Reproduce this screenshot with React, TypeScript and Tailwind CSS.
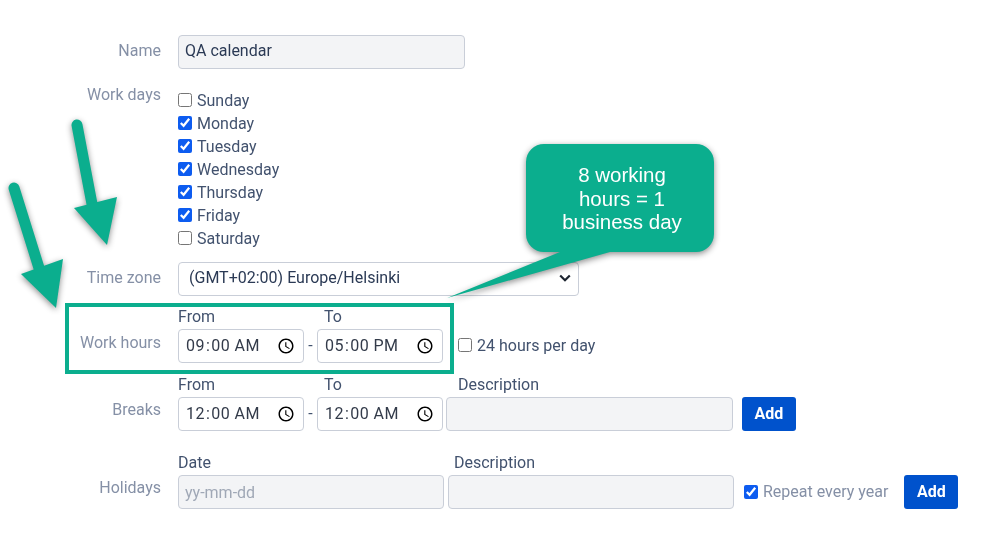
import React from "react";

const font = { fontFamily: "Roboto, sans-serif" };

function Row({ label, labelClass = "", className = "", children }: { label: string; labelClass?: string; className?: string; children: React.ReactNode }) {
  return (
    <div className={`flex ${className}`}>
      <div className={`w-[161px] shrink-0 text-right text-[#8590a6] ${labelClass}`}>{label}</div>
      <div className="ml-[17px] min-w-0 grow">{children}</div>
    </div>
  );
}

function Check({ label, checked = false, className = "" }: { label: string; checked?: boolean; className?: string }) {
  return (
    <label className={`flex h-[23px] items-center text-[#42526e] ${className}`}>
      <input type="checkbox" defaultChecked={checked} className="m-0 mb-[2px] h-[14px] w-[14px] accent-[#0d5cf0]" />
      <span className="ml-[5px]">{label}</span>
    </label>
  );
}

function Time({ value }: { value: string }) {
  return (
    <input
      type="time"
      defaultValue={value}
      className="h-[34px] w-[126px] rounded border border-[#c9ced8] bg-white pb-[1px] pl-[6px] pr-[8px] tracking-[0.45px] text-[#333b4a] outline-none [&::-webkit-calendar-picker-indicator]:m-0 [&::-webkit-calendar-picker-indicator]:h-[18px] [&::-webkit-calendar-picker-indicator]:w-[18px] [&::-webkit-calendar-picker-indicator]:p-0"
    />
  );
}

function Field({ w, placeholder, value, className = "" }: { w: string; placeholder?: string; value?: string; className?: string }) {
  return (
    <input
      readOnly
      placeholder={placeholder}
      defaultValue={value}
      className={`h-[34px] ${w} rounded border border-[#c9ced8] bg-[#f3f4f6] px-[6px] text-[#2b3a55] outline-none placeholder:text-[#a0a8b6] ${className}`}
    />
  );
}

function Add({ className = "" }: { className?: string }) {
  return (
    <button className={`h-[34px] w-[54px] rounded-[3px] bg-[#0052cc] font-bold text-white ${className}`}>Add</button>
  );
}

const Cap = ({ className = "", children }: { className?: string; children: React.ReactNode }) => (
  <div className={`h-[24px] leading-[23px] text-[#42526e] ${className}`}>{children}</div>
);

export default function App() {
  return (
    <div className="relative h-[539px] w-[998px] overflow-hidden bg-white text-[16px] blur-[0.35px]" style={font}>
      <div className="pt-[35px]">
        <Row label="Name" labelClass="leading-[31px]">
          <Field w="w-[287px]" value="QA calendar" className="pb-[3px]" />
        </Row>

        <Row label="Work days" labelClass="leading-[12px]" className="mt-[20px]">
          <div>
            <Check label="Sunday" />
            <Check label="Monday" checked />
            <Check label="Tuesday" checked />
            <Check label="Wednesday" checked />
            <Check label="Thursday" checked />
            <Check label="Friday" checked />
            <Check label="Saturday" />
          </div>
        </Row>

        <Row label="Time zone" labelClass="leading-[31px]" className="mt-[12px]">
          <div className="relative w-[401px]">
            <select className="h-[34px] w-full appearance-none rounded border border-[#c9ced8] bg-white pb-[3px] pl-[10px] text-[#2b3a55] outline-none">
              <option>(GMT+02:00) Europe/Helsinki</option>
            </select>
            <svg className="pointer-events-none absolute right-[8px] top-[12px]" width="12" height="8" viewBox="0 0 12 8" fill="none">
              <path d="M1.2 1.5 L6 6.2 L10.8 1.5" stroke="#1c2430" strokeWidth="2.2" />
            </svg>
          </div>
        </Row>

        <Row label="Work hours" labelClass="pt-[26px] leading-[24px]" className="mt-[9px]">
          <div className="flex">
            <Cap className="w-[146px]">From</Cap>
            <Cap>To</Cap>
          </div>
          <div className="flex items-center">
            <Time value="09:00" />
            <span className="w-[13px] text-center text-[#42526e]">-</span>
            <Time value="17:00" />
            <Check label="24 hours per day" className="ml-[15px]" />
          </div>
        </Row>

        <Row label="Breaks" labelClass="pt-[25px] leading-[24px]" className="mt-[10px]">
          <div className="flex">
            <Cap className="w-[146px]">From</Cap>
            <Cap className="w-[134px]">To</Cap>
            <Cap>Description</Cap>
          </div>
          <div className="flex items-center">
            <Time value="00:00" />
            <span className="w-[13px] text-center text-[#42526e]">-</span>
            <Time value="00:00" />
            <span className="w-[3px]" />
            <Field w="w-[287px]" />
            <Add className="ml-[9px]" />
          </div>
        </Row>

        <Row label="Holidays" labelClass="pt-[25px] leading-[24px]" className="mt-[20px]">
          <div className="flex">
            <Cap className="w-[276px]">Date</Cap>
            <Cap>Description</Cap>
          </div>
          <div className="flex items-center">
            <Field w="w-[266px]" placeholder="yy-mm-dd" />
            <span className="w-[4px]" />
            <Field w="w-[286px]" />
            <label className="ml-[10px] flex items-center text-[#8590a6]">
              <input type="checkbox" defaultChecked className="m-0 h-[14px] w-[14px] accent-[#0d5cf0]" />
              <span className="ml-[5px]">Repeat every year</span>
            </label>
            <Add className="ml-[16px]" />
          </div>
        </Row>
      </div>

      {/* Annotation: box around the work hours */}
      <div className="pointer-events-none absolute left-[65px] top-[303px] h-[71px] w-[389px] border-[4px] border-[#0bae8e]" />

      {/* Annotation: arrows */}
      <svg className="pointer-events-none absolute left-0 top-0 drop-shadow-[0_2px_3px_rgba(0,0,0,0.45)]" width="130" height="320" viewBox="0 0 130 320">
        <path d="M77 125 L92 204" stroke="#0bae8e" strokeWidth="11" strokeLinecap="round" fill="none" />
        <path d="M74 208 L117 197 L107 245 Z" fill="#0bae8e" />
        <path d="M14 188 L39 268" stroke="#0bae8e" strokeWidth="11" strokeLinecap="round" fill="none" />
        <path d="M21 274 L63 259 L56 308 Z" fill="#0bae8e" />
      </svg>

      {/* Annotation: callout */}
      <svg className="pointer-events-none absolute left-[440px] top-[140px] drop-shadow-[0_2px_3px_rgba(0,0,0,0.45)]" width="285" height="165" viewBox="440 140 285 165">
        <path d="M544 144 H696 A18 18 0 0 1 714 162 V234 A18 18 0 0 1 696 252 H610 L447 298 L560 252 H544 A18 18 0 0 1 526 234 V162 A18 18 0 0 1 544 144 Z" fill="#0bae8e" />
      </svg>
      <div
        className="absolute left-[528px] top-[163px] w-[188px] text-center text-[20.5px] leading-[23.5px] text-white"
        style={{ fontFamily: "'Liberation Sans', sans-serif" }}
      >
        8 working<br />hours = 1<br />business day
      </div>
    </div>
  );
}
